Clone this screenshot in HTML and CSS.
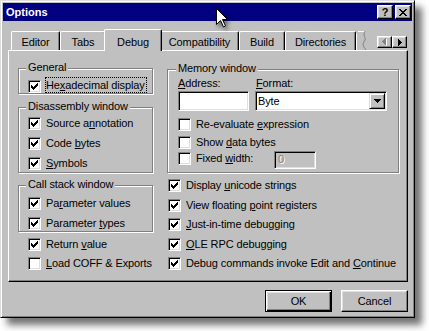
FILE: index.html
```html
<!DOCTYPE html>
<html>
<head>
<meta charset="utf-8">
<title>Options</title>
<link rel="stylesheet" href="styles.css">
</head>
<body>
<div class="screen">
  <div class="window">
    <div class="titlebar">
      <span class="title">Options</span>
      <div class="caption-btns">
        <span class="cbtn help">?</span>
        <span class="cbtn close"><svg width="8" height="7" viewBox="0 0 8 7" shape-rendering="crispEdges"><path d="M0 0h2v1h-2z M6 0h2v1h-2z M1 1h2v1h-2z M5 1h2v1h-2z M2 2h4v1h-4z M3 3h2v1h-2z M2 4h4v1h-4z M1 5h2v1h-2z M5 5h2v1h-2z M0 6h2v1h-2z M6 6h2v1h-2z" fill="#000"/></svg></span>
      </div>
    </div>

    <div class="tabstrip">
      <div class="tab t-editor">Editor</div>
      <div class="tab t-tabs">Tabs</div>
      <div class="tab t-debug selected">Debug</div>
      <div class="tab t-compat">Compatibility</div>
      <div class="tab t-build">Build</div>
      <div class="tab t-dirs">Directories</div>
      <div class="tab-partial"><svg width="13" height="19" viewBox="0 0 13 19"><path d="M0.5 19V2.5 M1.5 1.5h0.01 M2 0.5H8" stroke="#fff" stroke-width="1" fill="none"/><path d="M9 0.5 C6 4, 11 7, 8.5 10 S 7 15, 10 19" stroke="#808080" stroke-width="1" fill="none"/></svg></div>
      <div class="spin">
        <span class="spin-btn"><svg width="5" height="8" viewBox="0 0 5 8" shape-rendering="crispEdges"><path d="M4 1h1v7h-1z M3 2h1v5h-1z M2 3h1v3h-1z M1 4h1v1h-1z" fill="#fff"/><path d="M3 0h1v7h-1z M2 1h1v5h-1z M1 2h1v3h-1z M0 3h1v1h-1z" fill="#808080"/></svg></span>
        <span class="spin-btn"><svg width="4" height="7" viewBox="0 0 4 7" shape-rendering="crispEdges"><path d="M0 0h1v7h-1z M1 1h1v5h-1z M2 2h1v3h-1z M3 3h1v1h-1z" fill="#000"/></svg></span>
      </div>
    </div>

    <div class="panel">
      <div class="col left-col">
        <div class="group g-general">
          <div class="legend">General</div>
          <div class="cb first-general">
            <span class="box"><svg class="check" viewBox="0 0 7 7" shape-rendering="crispEdges"><path d="M6 0h1v1h-1z M5 1h2v1h-2z M0 2h1v1h-1z M4 2h3v1h-3z M0 3h2v1h-2z M3 3h3v1h-3z M0 4h5v1h-5z M1 5h3v1h-3z M2 6h1v1h-1z"/></svg></span>
            <span class="txt focus">He<u>x</u>adecimal display</span>
          </div>
        </div>

        <div class="group g-disasm">
          <div class="legend">Disassembly window</div>
          <div class="cb first-disasm">
            <span class="box"><svg class="check" viewBox="0 0 7 7" shape-rendering="crispEdges"><path d="M6 0h1v1h-1z M5 1h2v1h-2z M0 2h1v1h-1z M4 2h3v1h-3z M0 3h2v1h-2z M3 3h3v1h-3z M0 4h5v1h-5z M1 5h3v1h-3z M2 6h1v1h-1z"/></svg></span>
            <span class="txt">Source a<u>n</u>notation</span>
          </div>
          <div class="cb next7">
            <span class="box"><svg class="check" viewBox="0 0 7 7" shape-rendering="crispEdges"><path d="M6 0h1v1h-1z M5 1h2v1h-2z M0 2h1v1h-1z M4 2h3v1h-3z M0 3h2v1h-2z M3 3h3v1h-3z M0 4h5v1h-5z M1 5h3v1h-3z M2 6h1v1h-1z"/></svg></span>
            <span class="txt">Code <u>b</u>ytes</span>
          </div>
          <div class="cb next7">
            <span class="box"><svg class="check" viewBox="0 0 7 7" shape-rendering="crispEdges"><path d="M6 0h1v1h-1z M5 1h2v1h-2z M0 2h1v1h-1z M4 2h3v1h-3z M0 3h2v1h-2z M3 3h3v1h-3z M0 4h5v1h-5z M1 5h3v1h-3z M2 6h1v1h-1z"/></svg></span>
            <span class="txt"><u>S</u>ymbols</span>
          </div>
        </div>

        <div class="group g-callstack">
          <div class="legend">Call stack window</div>
          <div class="cb first-general">
            <span class="box"><svg class="check" viewBox="0 0 7 7" shape-rendering="crispEdges"><path d="M6 0h1v1h-1z M5 1h2v1h-2z M0 2h1v1h-1z M4 2h3v1h-3z M0 3h2v1h-2z M3 3h3v1h-3z M0 4h5v1h-5z M1 5h3v1h-3z M2 6h1v1h-1z"/></svg></span>
            <span class="txt">Pa<u>r</u>ameter values</span>
          </div>
          <div class="cb next7">
            <span class="box"><svg class="check" viewBox="0 0 7 7" shape-rendering="crispEdges"><path d="M6 0h1v1h-1z M5 1h2v1h-2z M0 2h1v1h-1z M4 2h3v1h-3z M0 3h2v1h-2z M3 3h3v1h-3z M0 4h5v1h-5z M1 5h3v1h-3z M2 6h1v1h-1z"/></svg></span>
            <span class="txt">Parameter <u>t</u>ypes</span>
          </div>
        </div>

        <div class="cb loose indent">
          <span class="box"><svg class="check" viewBox="0 0 7 7" shape-rendering="crispEdges"><path d="M6 0h1v1h-1z M5 1h2v1h-2z M0 2h1v1h-1z M4 2h3v1h-3z M0 3h2v1h-2z M3 3h3v1h-3z M0 4h5v1h-5z M1 5h3v1h-3z M2 6h1v1h-1z"/></svg></span>
          <span class="txt">Return <u>v</u>alue</span>
        </div>
        <div class="cb loose indent">
          <span class="box"></span>
          <span class="txt"><u>L</u>oad COFF &amp; Exports</span>
        </div>
      </div>

      <div class="col right-col">
        <div class="group g-memory">
          <div class="legend">Memory window</div>
          <div class="fields">
            <div class="fcol f-addr">
              <div class="flabel"><u>A</u>ddress:</div>
              <div class="field"></div>
            </div>
            <div class="fcol f-fmt">
              <div class="flabel"><u>F</u>ormat:</div>
              <div class="field select">
                <span class="sel-text">Byte</span>
                <span class="sel-btn"><svg width="7" height="4" viewBox="0 0 7 4" shape-rendering="crispEdges"><path d="M0 0h7v1h-7z M1 1h5v1h-5z M2 2h3v1h-3z M3 3h1v1h-1z" fill="#000"/></svg></span>
              </div>
            </div>
          </div>
          <div class="cb m-reeval">
            <span class="box"></span>
            <span class="txt">Re-evaluate <u>e</u>xpression</span>
          </div>
          <div class="cb m-show">
            <span class="box"></span>
            <span class="txt">Show <u>d</u>ata bytes</span>
          </div>
          <div class="cb m-fixed">
            <span class="box"></span>
            <span class="txt fw-label">Fixed <u>w</u>idth:</span>
            <span class="field disabled">0</span>
          </div>
        </div>

        <div class="cb loose flush">
          <span class="box"><svg class="check" viewBox="0 0 7 7" shape-rendering="crispEdges"><path d="M6 0h1v1h-1z M5 1h2v1h-2z M0 2h1v1h-1z M4 2h3v1h-3z M0 3h2v1h-2z M3 3h3v1h-3z M0 4h5v1h-5z M1 5h3v1h-3z M2 6h1v1h-1z"/></svg></span>
          <span class="txt">Display <u>u</u>nicode strings</span>
        </div>
        <div class="cb loose7 flush">
          <span class="box"><svg class="check" viewBox="0 0 7 7" shape-rendering="crispEdges"><path d="M6 0h1v1h-1z M5 1h2v1h-2z M0 2h1v1h-1z M4 2h3v1h-3z M0 3h2v1h-2z M3 3h3v1h-3z M0 4h5v1h-5z M1 5h3v1h-3z M2 6h1v1h-1z"/></svg></span>
          <span class="txt">View floating <u>p</u>oint registers</span>
        </div>
        <div class="cb loose flush">
          <span class="box"><svg class="check" viewBox="0 0 7 7" shape-rendering="crispEdges"><path d="M6 0h1v1h-1z M5 1h2v1h-2z M0 2h1v1h-1z M4 2h3v1h-3z M0 3h2v1h-2z M3 3h3v1h-3z M0 4h5v1h-5z M1 5h3v1h-3z M2 6h1v1h-1z"/></svg></span>
          <span class="txt"><u>J</u>ust-in-time debugging</span>
        </div>
        <div class="cb loose7 flush">
          <span class="box"><svg class="check" viewBox="0 0 7 7" shape-rendering="crispEdges"><path d="M6 0h1v1h-1z M5 1h2v1h-2z M0 2h1v1h-1z M4 2h3v1h-3z M0 3h2v1h-2z M3 3h3v1h-3z M0 4h5v1h-5z M1 5h3v1h-3z M2 6h1v1h-1z"/></svg></span>
          <span class="txt"><u>O</u>LE RPC debugging</span>
        </div>
        <div class="cb loose flush">
          <span class="box"><svg class="check" viewBox="0 0 7 7" shape-rendering="crispEdges"><path d="M6 0h1v1h-1z M5 1h2v1h-2z M0 2h1v1h-1z M4 2h3v1h-3z M0 3h2v1h-2z M3 3h3v1h-3z M0 4h5v1h-5z M1 5h3v1h-3z M2 6h1v1h-1z"/></svg></span>
          <span class="txt">Debug commands invoke Edit and <u>C</u>ontinue</span>
        </div>
      </div>
    </div>

    <div class="buttons">
      <div class="btn default">OK</div>
      <div class="btn">Cancel</div>
    </div>
  </div>

  <svg class="cursor" width="13" height="20" viewBox="0 0 13 20"><path d="M0.5 0.5V16.5L4.5 12.5L7.5 19L9.5 18L6.5 11.5H11.5Z" fill="#fff" stroke="#000" stroke-width="1" stroke-linejoin="miter"/></svg>
</div>
</body>
</html>
```

FILE: styles.css
```css
* { box-sizing: border-box; }

html, body {
  margin: 0;
  padding: 0;
  background: #fff;
}

body {
  font-family: "Liberation Sans", Arial, sans-serif;
  font-size: 11px;
  line-height: 13px;
  letter-spacing: -0.12px;
  color: #000;
}

u { text-underline-offset: 1px; }

.screen {
  position: relative;
  width: 429px;
  height: 331px;
  overflow: hidden;
}

/* ---------- window frame ---------- */
.window {
  width: 415px;
  height: 318px;
  background: #c0c0c0;
  border: 1px solid;
  border-color: #dfdfdf #000 #000 #dfdfdf;
  box-shadow: inset 1px 1px #fff, inset -1px -1px #808080, 7px 7px 7px rgba(0, 0, 0, 0.55);
  padding: 2px;
  display: flex;
  flex-direction: column;
}

.titlebar {
  flex-shrink: 0;
  height: 18px;
  background: #000080;
  display: flex;
  align-items: center;
  justify-content: space-between;
  padding: 0 1px 0 3px;
}

.title {
  color: #fff;
  font-weight: bold;
  letter-spacing: 0;
}

.caption-btns {
  display: flex;
  gap: 2px;
}

.cbtn {
  width: 16px;
  height: 14px;
  background: #c0c0c0;
  border: 1px solid;
  border-color: #fff #000 #000 #fff;
  box-shadow: inset -1px -1px #808080, inset 1px 1px #dfdfdf;
  display: flex;
  align-items: center;
  justify-content: center;
  font-weight: bold;
  font-size: 11px;
  line-height: 12px;
}

.cbtn.close svg { display: block; }

/* ---------- tabs ---------- */
.tabstrip {
  flex-shrink: 0;
  position: relative;
  z-index: 1;
  margin: 8px 0 0 5px;
  width: 400px;
  height: 21px;
  padding-left: 3px;
  display: flex;
  align-items: flex-end;
}

.tab {
  flex-shrink: 0;
  height: 19px;
  border: 1px solid;
  border-bottom: none;
  border-color: #fff #000 #000 #fff;
  border-radius: 2px 2px 0 0;
  box-shadow: inset -1px 0 #808080;
  background: #c0c0c0;
  text-align: center;
  white-space: nowrap;
  padding-top: 4px;
}

.tab.selected {
  height: 22px;
  margin: 0 -2px -1px;
  padding-top: 6px;
  position: relative;
  z-index: 2;
}

.t-editor { width: 49px; }
.t-tabs { width: 46px; }
.t-debug { width: 58px; }
.t-compat { width: 79px; }
.t-build { width: 46px; }
.t-dirs { width: 71px; }

.tab-partial {
  flex-shrink: 0;
  width: 13px;
  height: 19px;
}
.tab-partial svg { display: block; }

.spin {
  display: flex;
  align-self: flex-start;
  margin: 7px 1px 0 auto;
}

.spin-btn {
  width: 15px;
  height: 12px;
  background: #c0c0c0;
  border: 1px solid;
  border-color: #fff #000 #000 #fff;
  box-shadow: inset -1px -1px #808080, inset 1px 1px #dfdfdf;
  display: flex;
  align-items: center;
  justify-content: center;
}
.spin-btn svg { display: block; }

/* ---------- panel ---------- */
.panel {
  flex-shrink: 0;
  margin-left: 5px;
  width: 400px;
  height: 232px;
  border: 1px solid;
  border-color: #fff #000 #000 #fff;
  box-shadow: inset -1px -1px #808080;
  display: flex;
  gap: 14px;
  padding-left: 9px;
}

.col {
  display: flex;
  flex-direction: column;
}
.left-col { width: 135px; }
.right-col { width: 232px; }

.group {
  border: 1px solid #808080;
  box-shadow: inset 1px 1px #fff, 1px 1px #fff;
  display: flex;
  flex-direction: column;
  padding-left: 9px;
}

.legend {
  align-self: flex-start;
  height: 13px;
  margin: -8px 0 0 -2px;
  padding: 0 2px;
  background: #c0c0c0;
  white-space: nowrap;
}

.g-general { margin-top: 17px; }
.g-disasm { margin-top: 13px; padding-bottom: 2px; }
.g-callstack { margin-top: 12px; padding-bottom: 1px; }
.g-memory { margin-top: 18px; padding-left: 10px; padding-bottom: 3px; }

/* ---------- checkboxes ---------- */
.cb {
  display: flex;
  align-items: center;
  height: 13px;
  white-space: nowrap;
}

.first-general { margin-top: 6px; }
.first-disasm { margin-top: 4px; }
.next7 { margin-top: 7px; }
.loose { margin-top: 6px; }
.loose7 { margin-top: 7px; }
.indent { margin-left: 10px; }
.flush { margin-left: 1px; }

.box {
  flex-shrink: 0;
  width: 13px;
  height: 13px;
  background: #fff;
  border: 1px solid;
  border-color: #808080 #fff #fff #808080;
  box-shadow: inset 1px 1px #000, inset -1px -1px #dfdfdf;
  padding: 2px;
  margin-right: 5px;
}

.check {
  display: block;
  width: 7px;
  height: 7px;
  fill: #000;
}

.focus {
  align-self: flex-start;
  margin: -3px 0 0 -1px;
  height: 16px;
  padding-right: 1px;
  border: 1px dotted #000;
  display: flex;
  align-items: center;
}

/* ---------- memory fields ---------- */
.fields {
  display: flex;
  gap: 6px;
  margin-top: 2px;
}

.f-addr { width: 71px; }
.f-fmt { width: 132px; }
.f-fmt .flabel { padding-left: 1px; }

.flabel { height: 13px; }

.field {
  display: block;
  margin-top: 1px;
  height: 20px;
  background: #fff;
  border: 1px solid;
  border-color: #808080 #fff #fff #808080;
  box-shadow: inset 1px 1px #000, inset -1px -1px #dfdfdf;
}

.select {
  display: flex;
  align-items: center;
  justify-content: space-between;
  padding: 1px;
}

.sel-text { padding-left: 1px; }

.sel-btn {
  width: 16px;
  height: 16px;
  background: #c0c0c0;
  border: 1px solid;
  border-color: #dfdfdf #000 #000 #dfdfdf;
  box-shadow: inset 1px 1px #fff, inset -1px -1px #808080;
  display: flex;
  align-items: center;
  justify-content: center;
}
.sel-btn svg { display: block; }

.m-reeval { margin-top: 7px; }
.m-show { margin-top: 5px; }

.m-fixed {
  margin-top: 2px;
  height: 18px;
  align-items: flex-start;
}
.m-fixed .box { margin-top: 1px; }
.m-fixed .txt { line-height: 15px; }

.fw-label { width: 78px; }

.field.disabled {
  margin-top: 0;
  width: 42px;
  height: 18px;
  background: #c0c0c0;
  color: #808080;
  text-shadow: 1px 1px #fff;
  padding-left: 3px;
  line-height: 14px;
}

/* ---------- dialog buttons ---------- */
.buttons {
  flex-shrink: 0;
  margin: 8px 0 0 5px;
  width: 400px;
  display: flex;
  justify-content: flex-end;
  gap: 9px;
}

.btn {
  width: 67px;
  height: 22px;
  display: flex;
  align-items: center;
  justify-content: center;
  background: #c0c0c0;
  border: 1px solid;
  border-color: #fff #000 #000 #fff;
  box-shadow: inset -1px -1px #808080, inset 1px 1px #dfdfdf;
}

.btn.default {
  border: 1px solid #000;
  box-shadow: inset 1px 1px #fff, inset -1px -1px #000, inset -2px -2px #808080, inset 2px 2px #dfdfdf;
}

/* ---------- mouse pointer overlay ---------- */
.cursor {
  position: absolute;
  left: 216px;
  top: 8px;
  filter: drop-shadow(2px 3px 2px rgba(0, 0, 0, 0.5));
}
```
